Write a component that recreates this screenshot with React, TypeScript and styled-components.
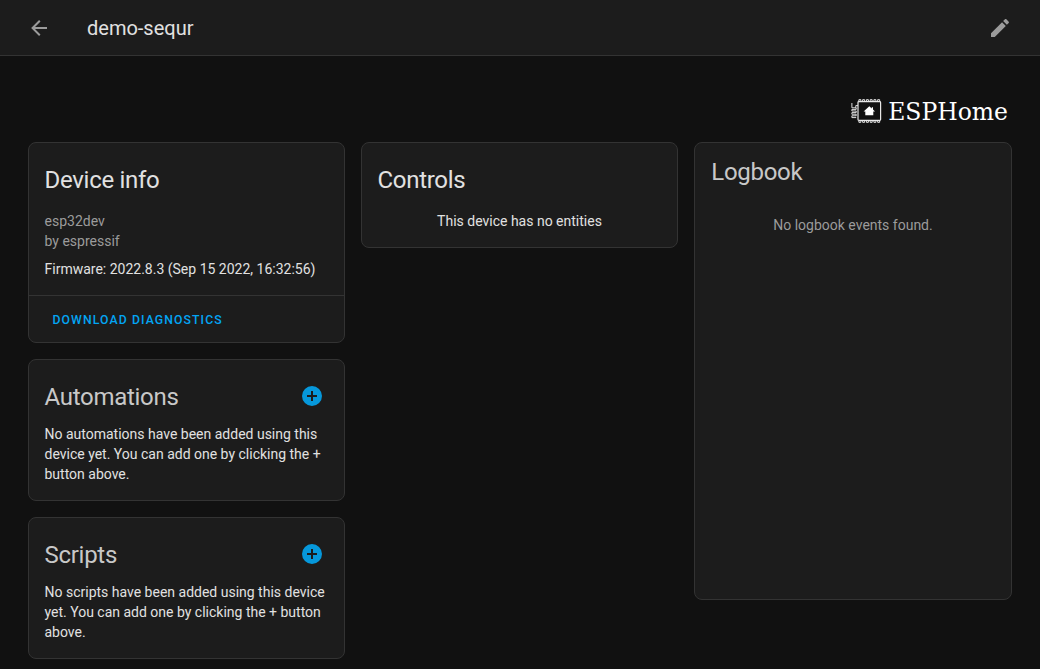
import React from "react";
import styled, { createGlobalStyle } from "styled-components";

const GlobalStyle = createGlobalStyle`
  * { box-sizing: border-box; }
  body {
    margin: 0;
    background: #111111;
    color: #e1e1e1;
    font-family: Roboto, "Noto Sans", sans-serif;
    font-size: 14px;
    line-height: 20px;
    overflow: hidden;
  }
`;

const Page = styled.div`
  min-height: 669px;
  background: #111111;
`;

const Toolbar = styled.header`
  display: flex;
  align-items: center;
  height: 56px;
  padding: 0 16px 0 15px;
  background: #1c1c1c;
  border-bottom: 1px solid #333333;
`;

const ToolbarTitle = styled.h1`
  flex: 1;
  margin: 0 0 0 25px;
  padding-top: 1px;
  font-size: 20px;
  font-weight: 400;
  line-height: 56px;
`;

const IconButton = styled.button<{ $size: number; $color: string }>`
  display: flex;
  align-items: center;
  justify-content: center;
  flex: none;
  width: ${(p) => p.$size}px;
  height: ${(p) => p.$size}px;
  padding: 0;
  border: 0;
  background: none;
  color: ${(p) => p.$color};
`;

const Content = styled.main`
  display: flex;
  flex-direction: column;
  padding: 41px 28px 0;
`;

const LogoRow = styled.div`
  display: flex;
  justify-content: flex-end;
  height: 45px;
  padding-right: 4px;
`;

const Columns = styled.div`
  display: grid;
  grid-template-columns: 317px 317px 1fr;
  gap: 16px;
  align-items: start;
`;

const Column = styled.div`
  display: flex;
  flex-direction: column;
  gap: 16px;
`;

const Card = styled.section<{ $height?: number }>`
  border: 1px solid #333333;
  border-radius: 8px;
  background: #1c1c1c;
  height: ${(p) => (p.$height ? `${p.$height}px` : "auto")};
`;

const CardHeader = styled.div<{ $compact?: boolean; $dim?: boolean }>`
  display: flex;
  align-items: flex-start;
  justify-content: space-between;
  padding: ${(p) => (p.$compact ? "5px 16px 8px 16.3px" : "13px 16px 7px 15.5px")};
  color: ${(p) => (p.$dim ? "#c8c8c8" : "#e1e1e1")};
`;

const CardTitle = styled.h2`
  margin: 0;
  font-size: 24px;
  font-weight: 400;
  line-height: 48px;
  letter-spacing: -0.012em;
`;

const CardContent = styled.div<{ $raised?: boolean; $center?: boolean }>`
  margin-top: ${(p) => (p.$raised ? "-4px" : "0")};
  padding: ${(p) => (p.$center ? "0 16px 16px" : "0 16px 16px 15.5px")};
  text-align: ${(p) => (p.$center ? "center" : "left")};
`;

const Secondary = styled.div`
  color: #9b9b9b;
`;

const Firmware = styled.div`
  margin-top: 8px;
`;

const Actions = styled.div`
  display: flex;
  padding: 5px 16px;
  border-top: 1px solid #333333;
`;

const TextButton = styled.button`
  height: 36px;
  padding: 2px 8px 0 7.5px;
  border: 0;
  background: none;
  color: #03a5f4;
  font-family: Roboto, sans-serif;
  font-size: 12.25px;
  font-weight: 500;
  letter-spacing: 1.09px;
  text-transform: uppercase;
`;

const NoEvents = styled.div`
  padding-top: 11px;
  text-align: center;
  color: #9b9b9b;
`;

const Icon = ({ d }: { d: string }) => (
  <svg width="24" height="24" viewBox="0 0 24 24" fill="currentColor">
    <path d={d} />
  </svg>
);

const ARROW_LEFT =
  "M20,11V13H8L13.5,18.5L12.08,19.92L4.16,12L12.08,4.08L13.5,5.5L8,11H20Z";
const PENCIL =
  "M20.71,7.04C21.1,6.65 21.1,6 20.71,5.63L18.37,3.29C18,2.9 17.35,2.9 16.96,3.29L15.12,5.12L18.87,8.87M3,17.25V21H6.75L17.81,9.93L14.06,6.18L3,17.25Z";
const PLUS_CIRCLE =
  "M17,13H13V17H11V13H7V11H11V7H13V11H17M12,2A10,10 0 0,0 2,12A10,10 0 0,0 12,22A10,10 0 0,0 22,12A10,10 0 0,0 12,2Z";

const AddButton = styled(IconButton)`
  margin-top: 7px;
`;

const pins = [0, 1, 2, 3, 4, 5];

const EspHomeLogo = () => (
  <svg width="160" height="28" viewBox="0 0 160 28" role="img" aria-label="ESPHome">
    <g fill="none" stroke="#e8e8e8">
      <rect x="10" y="4.7" width="22.6" height="18.6" rx="0.8" strokeWidth="1.2" />
      {pins.map((i) => (
        <g key={i} strokeWidth="1">
          <path d={`M${10.9 + i * 3.75} 4.2V2.7H${12.9 + i * 3.75}V4.2`} />
          <path d={`M${10.9 + i * 3.75} 23.8V25.3H${12.9 + i * 3.75}V23.8`} />
        </g>
      ))}
      <path
        strokeWidth="0.95"
        d="M3.9 6V10.8H8.2V12.4H3.9V14H8.2V15.6H3.9V17.2H8.2V18.8H3.9V20.6H8.2M7.8 10.8V8.6H10"
      />
    </g>
    <path fill="#ffffff" d="M21.3 9.2L23.8 11.5V10.3H25V12.6L27 14.4H25.3V18.2H17.3V14.4H15.6Z" />
    <text
      x="40.2"
      y="23"
      fill="#ffffff"
      fontFamily="'DejaVu Serif', serif"
      fontSize="23.5"
      textLength="119.8"
      lengthAdjust="spacingAndGlyphs"
    >
      ESPHome
    </text>
  </svg>
);

const AddCard = ({ title, children }: { title: string; children: React.ReactNode }) => (
  <Card>
    <CardHeader $dim>
      <CardTitle>{title}</CardTitle>
      <AddButton $size={32} $color="#0698db" aria-label={`Add ${title}`}>
        <Icon d={PLUS_CIRCLE} />
      </AddButton>
    </CardHeader>
    <CardContent $raised>{children}</CardContent>
  </Card>
);

export default function App() {
  return (
    <Page>
      <GlobalStyle />
      <Toolbar>
        <IconButton $size={47} $color="#9b9b9b" aria-label="Back">
          <Icon d={ARROW_LEFT} />
        </IconButton>
        <ToolbarTitle>demo-sequr</ToolbarTitle>
        <IconButton $size={48} $color="#9b9b9b" aria-label="Edit">
          <Icon d={PENCIL} />
        </IconButton>
      </Toolbar>
      <Content>
        <LogoRow>
          <EspHomeLogo />
        </LogoRow>
        <Columns>
          <Column>
            <Card>
              <CardHeader>
                <CardTitle>Device info</CardTitle>
              </CardHeader>
              <CardContent>
                <Secondary>esp32dev</Secondary>
                <Secondary>by espressif</Secondary>
                <Firmware>Firmware: 2022.8.3 (Sep 15 2022, 16:32:56)</Firmware>
              </CardContent>
              <Actions>
                <TextButton>Download diagnostics</TextButton>
              </Actions>
            </Card>
            <AddCard title="Automations">
              No automations have been added using this device yet. You can add one by
              clicking the + button above.
            </AddCard>
            <AddCard title="Scripts">
              No scripts have been added using this device yet. You can add one by
              clicking the + button above.
            </AddCard>
          </Column>
          <Card>
            <CardHeader>
              <CardTitle>Controls</CardTitle>
            </CardHeader>
            <CardContent $center>This device has no entities</CardContent>
          </Card>
          <Card $height={458}>
            <CardHeader $compact $dim>
              <CardTitle>Logbook</CardTitle>
            </CardHeader>
            <NoEvents>No logbook events found.</NoEvents>
          </Card>
        </Columns>
      </Content>
    </Page>
  );
}
